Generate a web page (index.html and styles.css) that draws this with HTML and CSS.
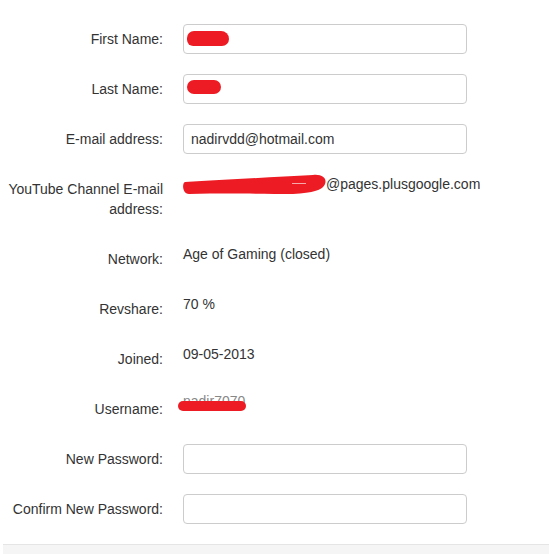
FILE: index.html
```html
<!DOCTYPE html>
<html lang="en">
<head>
    <meta charset="UTF-8">
    <meta name="viewport" content="width=device-width, initial-scale=1.0">
    <title>Account Settings</title>
    <link rel="stylesheet" href="styles.css">
</head>
<body>
    <div class="panel">
        <form class="settings">
            <div class="row">
                <label class="label" for="first">First Name:</label>
                <div class="field">
                    <input class="input" type="text" id="first">
                    <span class="scribble scribble-first"></span>
                </div>
            </div>
            <div class="row">
                <label class="label" for="last">Last Name:</label>
                <div class="field">
                    <input class="input" type="text" id="last">
                    <span class="scribble scribble-last"></span>
                </div>
            </div>
            <div class="row">
                <label class="label" for="email">E-mail address:</label>
                <div class="field">
                    <input class="input" type="email" id="email" value="nadirvdd@hotmail.com">
                </div>
            </div>
            <div class="row row-tall">
                <div class="label">YouTube Channel E-mail address:</div>
                <div class="field static">
                    <span class="hidden-part">
                        <svg width="144" height="22" viewBox="0 0 144 22">
                            <path d="M2 8 C40 6 90 3 130 1 C140 0 144 5 142 10 C140 16 130 19 110 20 C80 20 50 19 6 20 C-1 20 -1 9 2 8 Z" fill="#ed1c24"/>
                            <rect x="109" y="9" width="14" height="1" fill="#f7a8ab"/>
                        </svg>
                    </span>@pages.plusgoogle.com
                </div>
            </div>
            <div class="row">
                <div class="label">Network:</div>
                <div class="field static">Age of Gaming (closed)</div>
            </div>
            <div class="row">
                <div class="label">Revshare:</div>
                <div class="field static">70 %</div>
            </div>
            <div class="row">
                <div class="label">Joined:</div>
                <div class="field static">09-05-2013</div>
            </div>
            <div class="row">
                <div class="label">Username:</div>
                <div class="field static">
                    <span class="user-text">nadir7070</span>
                    <span class="scribble scribble-user"></span>
                </div>
            </div>
            <div class="row">
                <label class="label" for="pass">New Password:</label>
                <div class="field">
                    <input class="input" type="password" id="pass">
                </div>
            </div>
            <div class="row">
                <label class="label" for="pass2">Confirm New Password:</label>
                <div class="field">
                    <input class="input" type="password" id="pass2">
                </div>
            </div>
        </form>
        <div class="footer"></div>
    </div>
</body>
</html>
```

FILE: styles.css
```css
body {
    margin: 0;
    font-family: "Liberation Sans", Arial, sans-serif;
    font-size: 14px;
    line-height: 20px;
    color: #333;
    background: #fff;
}
.panel {
    padding-left: 3px;
}
.settings {
    padding-top: 24px;
}
.row {
    display: flex;
    min-height: 30px;
    margin-bottom: 20px;
}
.row-tall {
    margin-bottom: 21px;
}
.label {
    width: 155px;
    padding: 5px 0 4px 5px;
    text-align: right;
}
.field {
    position: relative;
    width: 284px;
    margin-left: 20px;
}
.static {
    white-space: nowrap;
}
.input {
    box-sizing: border-box;
    width: 284px;
    height: 30px;
    padding: 4px 7px;
    border: 1px solid #ccc;
    border-radius: 4px;
    font-family: "Liberation Sans", Arial, sans-serif;
    font-size: 14px;
    color: #333;
    background: #fff;
}
.scribble {
    position: absolute;
    background: #ed1c24;
}
.scribble-first {
    left: 4px;
    top: 7px;
    width: 42px;
    height: 15px;
    border-radius: 8px 9px 8px 7px;
}
.scribble-last {
    left: 4px;
    top: 6px;
    width: 34px;
    height: 14px;
    border-radius: 7px;
}
.hidden-part {
    display: inline-block;
    width: 143px;
    height: 20px;
    vertical-align: top;
}
.hidden-part svg {
    display: block;
}
.user-text {
    position: relative;
    top: -3px;
    color: #888;
}
.scribble-user {
    left: -5px;
    top: 7px;
    width: 68px;
    height: 10px;
    border-radius: 5px;
}
.footer {
    height: 10px;
    border-top: 1px solid #e5e5e5;
    background: #f5f5f5;
}
```
